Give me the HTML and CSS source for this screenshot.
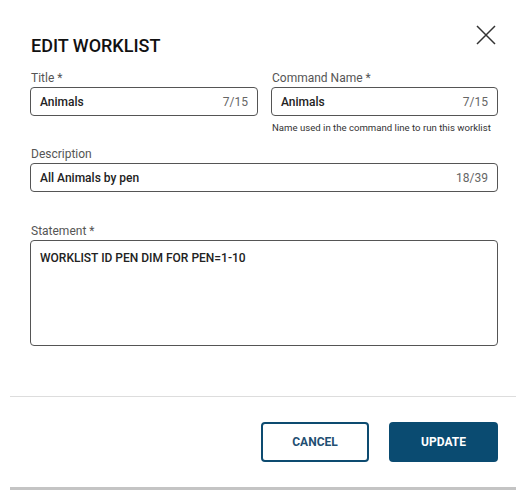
FILE: index.html
```html
<!DOCTYPE html>
<html lang="en">
<head>
<meta charset="utf-8">
<title>Edit Worklist</title>
<link rel="stylesheet" href="styles.css">
</head>
<body>
<div class="dialog">
  <div class="header">
    <h1 class="title">EDIT WORKLIST</h1>
    <button class="close" aria-label="Close">
      <svg width="20" height="20" viewBox="0 0 20 20"><path d="M1 1 L19 19 M19 1 L1 19" stroke="#333" stroke-width="1.5" fill="none"/></svg>
    </button>
  </div>
  <div class="body">
    <div class="row two">
      <div class="field">
        <label class="label">Title *</label>
        <div class="input"><span class="value">Animals</span><span class="count">7/15</span></div>
      </div>
      <div class="field">
        <label class="label">Command Name *</label>
        <div class="input"><span class="value">Animals</span><span class="count">7/15</span></div>
        <div class="helper">Name used in the command line to run this worklist</div>
      </div>
    </div>
    <div class="row desc">
      <div class="field">
        <label class="label">Description</label>
        <div class="input"><span class="value">All Animals by pen</span><span class="count">18/39</span></div>
      </div>
    </div>
    <div class="row stmt">
      <div class="field">
        <label class="label">Statement *</label>
        <div class="textarea"><span class="value">WORKLIST ID PEN DIM FOR PEN=1-10</span></div>
      </div>
    </div>
  </div>
  <div class="footer">
    <button class="btn btn-outline">CANCEL</button>
    <button class="btn btn-primary">UPDATE</button>
  </div>
</div>
</body>
</html>
```
FILE: styles.css
```css
* { box-sizing: border-box; }
html, body { margin: 0; padding: 0; background: #fff; }
body { font-family: Roboto, "Liberation Sans", sans-serif; color: #222; }

.dialog {
  margin: 10px 4px 0 10px;
  width: 506px;
  background: #fff;
  border-bottom: 3px solid #c4c4c4;
  display: flex;
  flex-direction: column;
}

.header {
  display: flex;
  justify-content: space-between;
  align-items: flex-start;
  padding: 15px 20px 0 21px;
}
.title {
  margin: 10px 0 0 0;
  font-size: 18px;
  line-height: 22px;
  font-weight: 500;
  color: #111;
}
.close {
  width: 20px;
  height: 20px;
  padding: 0;
  border: 0;
  background: none;
  display: block;
}
.close svg { display: block; }

.body {
  padding: 13px 18px 0 20px;
  display: flex;
  flex-direction: column;
}
.row.two {
  display: grid;
  grid-template-columns: 228px 227px;
  column-gap: 13px;
}
.row.desc { margin-top: 12px; }
.row.stmt { margin-top: 31px; }

.field { display: flex; flex-direction: column; }
.label {
  font-size: 12px;
  line-height: 16px;
  color: #555;
  padding-left: 1px;
}
.input {
  margin-top: 1px;
  height: 29px;
  border: 1px solid #555;
  border-radius: 4px;
  display: flex;
  align-items: center;
  justify-content: space-between;
  padding: 0 9px;
}
.value {
  font-size: 12px;
  line-height: 16px;
  font-weight: 500;
  color: #222;
}
.count {
  font-size: 12px;
  line-height: 16px;
  color: #666;
}
.helper {
  margin-top: 5px;
  padding-left: 1px;
  font-size: 9.6px;
  line-height: 13px;
  color: #333;
  white-space: nowrap;
}
.textarea {
  margin-top: 1px;
  height: 106px;
  border: 1px solid #555;
  border-radius: 4px;
  padding: 6px 9px;
}

.footer {
  margin-top: 50px;
  border-top: 1px solid #ddd;
  padding: 25px 18px 25px 0;
  display: flex;
  justify-content: flex-end;
  gap: 20px;
}
.btn {
  height: 40px;
  border-radius: 4px;
  font-family: Roboto, "Liberation Sans", sans-serif;
  font-size: 12px;
  font-weight: 700;
  padding: 0;
}
.btn-outline {
  width: 108px;
  background: #fff;
  border: 2px solid #0d4b70;
  color: #1f4f72;
}
.btn-primary {
  width: 109px;
  background: #0a4b71;
  border: 0;
  color: #fff;
}
```
